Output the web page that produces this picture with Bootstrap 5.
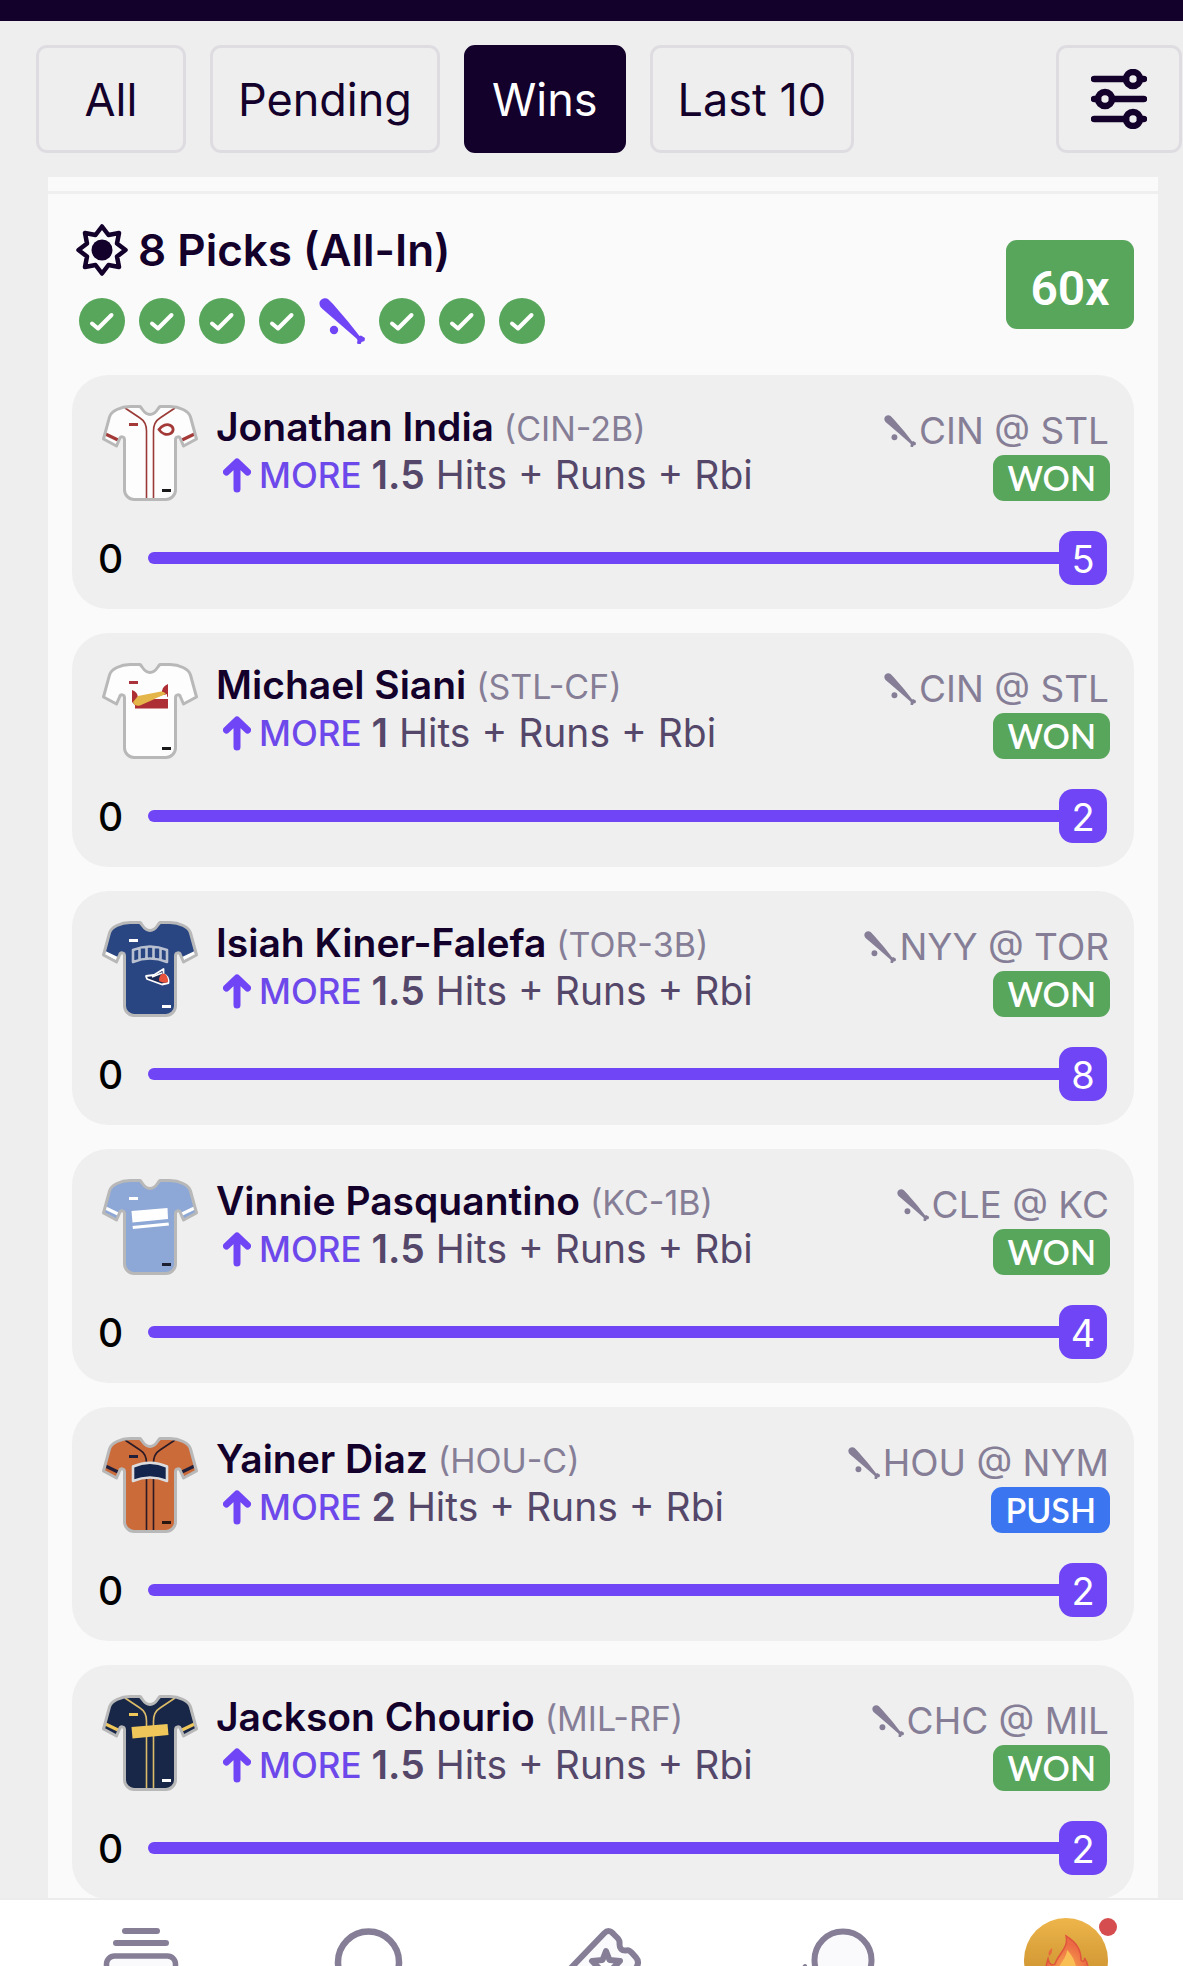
<!DOCTYPE html>
<html lang="en">
<head>
<meta charset="utf-8">
<meta name="viewport" content="width=device-width, initial-scale=1">
<title>My Picks</title>
<link href="https://cdn.jsdelivr.net/npm/bootstrap@5.3.0/dist/css/bootstrap.min.css" rel="stylesheet">
<style>
  :root { --ink: #13002b; --soft: #54476a; --muted: #857e96; --violet: #7045f5; --win: #58a65c; --push: #3b76f0; --line: #dedce1; }
  body { font-family: Inter, "Liberation Sans", sans-serif; color: var(--ink); background: #eee; }
  svg { display: block; flex: none; }
  .top-strip { height: 21px; background: var(--ink); flex: none; }
  .filters { padding: 24px 1px 24px 36px; gap: 24px; }
  .chip { height: 108px; min-width: 150px; padding: 2px 25px 0; border: 3px solid var(--line); border-radius: 11px; font-size: 45px; line-height: 54px; color: var(--ink); white-space: nowrap; }
  .chip.active { background: var(--ink) !important; border-color: var(--ink) !important; color: #fff !important; }
  .chip-icon { min-width: 126px; padding-top: 0; }
  .feed { min-height: 0; }
  .panel { margin: 0 25px 0 48px; background: #fafafa; }
  .panel-top { height: 17px; border-bottom: 3px solid #efefef; }
  .entry { padding: 28px 24px 24px; }
  .entry-title { font-size: 44px; line-height: 56px; font-weight: 600; gap: 9px; padding-left: 3px; }
  .results { gap: 14px; padding-left: 7px; margin-top: 20px; }
  .payout { width: 128px; height: 89px; margin-top: 2px; border-radius: 11px; background: var(--win); font: 600 48px/56px Roboto, sans-serif; padding-top: 10px; }
  .picks { gap: 24px; margin-top: 31px; }
  .pick { background: #efefef; border-radius: 36px; padding: 28px 24px 24px; }
  .jersey { margin: 2px 18px 0 6px; }
  .player { font-size: 39px; line-height: 48px; font-weight: 600; white-space: nowrap; }
  .team { font-size: 34px; font-weight: 400; color: var(--muted); }
  .stat { font-size: 39px; line-height: 44px; color: var(--soft); white-space: nowrap; padding-left: 7px; }
  .dir { font-size: 35px; font-weight: 500; color: #6d48ea; margin: 0 10px 0 8px; }
  .stat-line { font-weight: 600; margin-right: 11px; }
  .matchup { font-size: 37px; line-height: 48px; color: var(--muted); gap: 3px; padding-right: 1px; white-space: nowrap; }
  .outcome { font: 600 34px/46px Lato, sans-serif; border-radius: 11px; padding: 0 14px; color: #fff; background: var(--win); }
  .outcome-push { background: var(--push); }
  .meter { margin-top: 30px; padding-right: 3px; }
  .meter-from { width: 52px; padding: 2px 0 0 2px; font-size: 39px; line-height: 52px; font-weight: 500; color: #000; }
  .meter .progress { height: 12px; border-radius: 6px 0 0 6px; }
  .meter .progress-bar { background: var(--violet); }
  .meter-value { width: 48px; height: 54px; padding-top: 2px; border-radius: 14px; background: var(--violet); color: #fff; font-size: 38px; line-height: 52px; }
  .tabbar { height: 68px; border-top: 2px solid #ececec; background: #fff; padding: 0 1px 0 25px; flex: none; }
  .tabbar svg { color: var(--muted); overflow: visible; }
</style>
</head>
<body class="vh-100 d-flex flex-column overflow-hidden">

<svg width="0" height="0" class="position-absolute" aria-hidden="true">
  <defs>
    <symbol id="shirt" viewBox="0 0 96 96"><path d="M38 1.500H28C19 1.500 9 6 7.500 12L1.500 34L14.500 41L17.500 34C18.500 31 22.500 31 22.500 35V85C22.500 90 27 94.500 32 94.500H64C69 94.500 73.500 90 73.500 85V35C73.500 31 77.500 31 78.500 34L81.500 41L94.500 34L88.500 12C87 6 77 1.500 68 1.500H58C55 4 54 9.500 48 9.500S41 4 38 1.500Z"/></symbol>
    <symbol id="trim" viewBox="0 0 96 96"><path fill="none" stroke="#b8b8b9" stroke-width="3" stroke-linejoin="round" d="M38 1.500H28C19 1.500 9 6 7.500 12L1.500 34L14.500 41L17.500 34C18.500 31 22.500 31 22.500 35V85C22.500 90 27 94.500 32 94.500H64C69 94.500 73.500 90 73.500 85V35C73.500 31 77.500 31 78.500 34L81.500 41L94.500 34L88.500 12C87 6 77 1.500 68 1.500H58C55 4 54 9.500 48 9.500S41 4 38 1.500Z"/></symbol>
    <symbol id="piping" viewBox="0 0 96 96"><path fill="none" stroke="currentColor" stroke-width="1.600" d="M23 3L38 13Q44.500 17 44.500 26V93M73 3L58 13Q51.500 17 51.500 26V93"/></symbol>
    <symbol id="cuffs" viewBox="0 0 96 96"><path fill="none" stroke="currentColor" stroke-width="3.200" d="M3.500 29L16 35M92.500 29L80 35"/></symbol>
    <symbol id="bat" viewBox="0 0 46 46"><path fill="currentColor" d="M.5 6C0 1.500 6-1.500 9.500 1.500L14 6L29 23.500L40.500 38L42 37.500L46 40L45.500 43L42.500 44L41.500 46.500L38 45.500L38.500 42L37.500 40.500L22 27L3.500 11C1.500 9.500.8 8 .5 6Z"/><circle cx="15" cy="32" r="4.200" fill="currentColor"/></symbol>
    <symbol id="up" viewBox="0 0 28 35"><path fill="none" stroke="#7045f5" stroke-width="7" stroke-linecap="round" stroke-linejoin="round" d="M14 31V5M3.500 14L14 4L24.500 14"/></symbol>
    <symbol id="won" viewBox="0 0 46 46"><circle cx="23" cy="23" r="23" fill="#58a65c"/><path fill="none" stroke="#fff" stroke-width="4" stroke-linecap="round" stroke-linejoin="round" d="M13 25.500L19 30.500L32.500 17"/></symbol>
    <linearGradient id="gold" x1="0" y1="0" x2="0" y2="1"><stop offset="0" stop-color="#edb54a"/><stop offset="1" stop-color="#bf8527"/></linearGradient>
    <radialGradient id="fire" cx=".5" cy=".65" r=".5"><stop offset="0" stop-color="#f8b04f"/><stop offset="1" stop-color="#ec6a44"/></radialGradient>
  </defs>
</svg>

<div class="top-strip"></div>

<nav class="filters d-flex flex-shrink-0" aria-label="Filter entries">
  <button type="button" class="btn chip">All</button>
  <button type="button" class="btn chip">Pending</button>
  <button type="button" class="btn chip active" aria-pressed="true">Wins</button>
  <button type="button" class="btn chip">Last 10</button>
  <button type="button" class="btn chip chip-icon ms-auto d-flex align-items-center justify-content-center" aria-label="More filters">
    <svg width="56" height="60" viewBox="0 0 56 60" fill="none" stroke="#13002b" stroke-width="6.500" stroke-linecap="round"><path d="M3 10H35M49 10H53M3 30H7M21 30H53M3 50H35M49 50H53"/><circle cx="42" cy="10" r="7"/><circle cx="14" cy="30" r="7"/><circle cx="42" cy="50" r="7"/></svg>
  </button>
</nav>

<main class="feed flex-fill overflow-hidden">
  <div class="panel">
    <div class="panel-top"></div>
    <section class="entry">
      <header class="d-flex align-items-center justify-content-between">
        <div>
          <h1 class="entry-title d-flex align-items-center mb-0">
            <svg width="54" height="54" viewBox="0 0 54 54"><path fill="none" stroke="#13002b" stroke-width="4.500" stroke-linejoin="round" d="M27 3.500L33.500 12L44 10L42 20.500L50.500 27L42 33.500L44 44L33.500 42L27 50.500L20.500 42L10 44L12 33.500L3.500 27L12 20.500L10 10L20.500 12Z"/><circle cx="27" cy="27" r="10.500" fill="#13002b"/></svg>
            8 Picks (All-In)
          </h1>
          <div class="results d-flex">
            <svg width="46" height="46"><use href="#won"/></svg>
            <svg width="46" height="46"><use href="#won"/></svg>
            <svg width="46" height="46"><use href="#won"/></svg>
            <svg width="46" height="46"><use href="#won"/></svg>
            <svg width="46" height="46" color="#7045f5"><use href="#bat"/></svg>
            <svg width="46" height="46"><use href="#won"/></svg>
            <svg width="46" height="46"><use href="#won"/></svg>
            <svg width="46" height="46"><use href="#won"/></svg>
          </div>
        </div>
        <div class="payout text-white d-flex align-items-center justify-content-center">60x</div>
      </header>

      <div class="picks d-flex flex-column">

        <article class="pick">
          <div class="d-flex">
            <svg class="jersey" width="96" height="96" viewBox="0 0 96 96">
              <use href="#shirt" fill="#fdfdfd"/><use href="#piping" color="#9a3a37"/><use href="#cuffs" color="#a43a38"/>
              <path fill="#a43a38" d="M27 18h9v3h-9z"/><path fill="none" stroke="#a43a38" stroke-width="2.800" d="M57 24.500C60 20 65 18.500 68.500 20.500C72 22.500 72 26.500 68.500 28.500C64.500 30.500 60 29 57 24.500Z"/>
              <path fill="#1a1a1c" d="M60 84h9v3h-9z"/><use href="#trim"/>
            </svg>
            <div>
              <div class="player">Jonathan India <span class="team">(CIN-2B)</span></div>
              <div class="stat d-flex align-items-center"><svg width="28" height="35"><use href="#up"/></svg><span class="dir">MORE</span><span class="stat-line">1.5</span><span>Hits + Runs + Rbi</span></div>
            </div>
            <div class="ms-auto pt-1 d-flex flex-column align-items-end">
              <div class="matchup d-flex align-items-center"><svg width="32" height="32"><use href="#bat"/></svg><span>CIN @ STL</span></div>
              <div class="outcome">WON</div>
            </div>
          </div>
          <div class="meter d-flex align-items-center">
            <span class="meter-from">0</span>
            <div class="progress flex-fill" role="progressbar" aria-label="Jonathan India total" aria-valuenow="100" aria-valuemin="0" aria-valuemax="100"><div class="progress-bar" style="width:100%"></div></div>
            <span class="meter-value text-center">5</span>
          </div>
        </article>

        <article class="pick">
          <div class="d-flex">
            <svg class="jersey" width="96" height="96" viewBox="0 0 96 96">
              <use href="#shirt" fill="#fdfdfd"/>
              <path fill="#a9343b" d="M27 18h9v3h-9z"/>
              <path fill="#ad2f35" d="M30 27Q36 29 36 35L33 42L30 39ZM66 21V34L60 31Q59 24 66 21ZM33 40Q36 36 45 36H66V45.500H33Z"/>
              <path fill="#e4b549" d="M31 39L36 33L59 28.500Q62 28 64 31L38 42.500Q33 44 31 39Z"/><path fill="#fdfdfd" d="M52 36L65 31V35Z"/>
              <path fill="#1a1a1c" d="M60 84h9v3h-9z"/><use href="#trim"/>
            </svg>
            <div>
              <div class="player">Michael Siani <span class="team">(STL-CF)</span></div>
              <div class="stat d-flex align-items-center"><svg width="28" height="35"><use href="#up"/></svg><span class="dir">MORE</span><span class="stat-line">1</span><span>Hits + Runs + Rbi</span></div>
            </div>
            <div class="ms-auto pt-1 d-flex flex-column align-items-end">
              <div class="matchup d-flex align-items-center"><svg width="32" height="32"><use href="#bat"/></svg><span>CIN @ STL</span></div>
              <div class="outcome">WON</div>
            </div>
          </div>
          <div class="meter d-flex align-items-center">
            <span class="meter-from">0</span>
            <div class="progress flex-fill" role="progressbar" aria-label="Michael Siani total" aria-valuenow="100" aria-valuemin="0" aria-valuemax="100"><div class="progress-bar" style="width:100%"></div></div>
            <span class="meter-value text-center">2</span>
          </div>
        </article>

        <article class="pick">
          <div class="d-flex">
            <svg class="jersey" width="96" height="96" viewBox="0 0 96 96">
              <use href="#shirt" fill="#2a4682"/>
              <path fill="none" stroke="#fff" stroke-width="4" d="M3 32L15.500 38M93 32L80.500 38"/>
              <path fill="#fff" d="M27 18h9v3h-9zM60 84h9v3h-9z"/>
              <path fill="#2a4682" stroke="#b9c1d1" stroke-width="2.600" stroke-linejoin="round" d="M31 29Q48 22 65 29V41Q48 34 31 41ZM37.500 27V38M44.500 25.500V37M51.500 25.500V37M58.500 27V38"/>
              <path fill="#1c2a55" stroke="#fff" stroke-width="1.800" stroke-linejoin="round" d="M44 55L52 54L61.500 48V53Q67 55 66.500 62L60 63.500L45 58Z"/>
              <path fill="#e8533c" d="M57 60Q57 52.500 62 52.500Q66 54 66 61Q62 63 57 60Z"/><path fill="none" stroke="#fff" stroke-width="1.500" d="M50 56L60 52"/>
              <use href="#trim"/>
            </svg>
            <div>
              <div class="player">Isiah Kiner-Falefa <span class="team">(TOR-3B)</span></div>
              <div class="stat d-flex align-items-center"><svg width="28" height="35"><use href="#up"/></svg><span class="dir">MORE</span><span class="stat-line">1.5</span><span>Hits + Runs + Rbi</span></div>
            </div>
            <div class="ms-auto pt-1 d-flex flex-column align-items-end">
              <div class="matchup d-flex align-items-center"><svg width="32" height="32"><use href="#bat"/></svg><span>NYY @ TOR</span></div>
              <div class="outcome">WON</div>
            </div>
          </div>
          <div class="meter d-flex align-items-center">
            <span class="meter-from">0</span>
            <div class="progress flex-fill" role="progressbar" aria-label="Isiah Kiner-Falefa total" aria-valuenow="100" aria-valuemin="0" aria-valuemax="100"><div class="progress-bar" style="width:100%"></div></div>
            <span class="meter-value text-center">8</span>
          </div>
        </article>

        <article class="pick">
          <div class="d-flex">
            <svg class="jersey" width="96" height="96" viewBox="0 0 96 96">
              <use href="#shirt" fill="#8da8d6"/><use href="#cuffs" color="#fff"/>
              <path fill="#fff" d="M27 18h9v3h-9zM29.500 32L65.500 29L66 40L30.500 43.500ZM30.500 47L66.500 43.500L67 46.500L31 50Z"/>
              <path fill="#1c2030" d="M60 84h9v3h-9z"/><use href="#trim"/>
            </svg>
            <div>
              <div class="player">Vinnie Pasquantino <span class="team">(KC-1B)</span></div>
              <div class="stat d-flex align-items-center"><svg width="28" height="35"><use href="#up"/></svg><span class="dir">MORE</span><span class="stat-line">1.5</span><span>Hits + Runs + Rbi</span></div>
            </div>
            <div class="ms-auto pt-1 d-flex flex-column align-items-end">
              <div class="matchup d-flex align-items-center"><svg width="32" height="32"><use href="#bat"/></svg><span>CLE @ KC</span></div>
              <div class="outcome">WON</div>
            </div>
          </div>
          <div class="meter d-flex align-items-center">
            <span class="meter-from">0</span>
            <div class="progress flex-fill" role="progressbar" aria-label="Vinnie Pasquantino total" aria-valuenow="100" aria-valuemin="0" aria-valuemax="100"><div class="progress-bar" style="width:100%"></div></div>
            <span class="meter-value text-center">4</span>
          </div>
        </article>

        <article class="pick">
          <div class="d-flex">
            <svg class="jersey" width="96" height="96" viewBox="0 0 96 96">
              <use href="#shirt" fill="#cb6b3a"/><use href="#piping" color="#2b1a26"/><use href="#cuffs" color="#221f3a"/>
              <path fill="#221f3a" d="M27 18h9v3h-9z"/><path fill="#13244d" stroke="#dcdcdf" stroke-width="2.600" stroke-linejoin="round" d="M31 29.500Q48 22 65 29.500V44Q48 37 31 44Z"/>
              <path fill="#2b1712" d="M60 84h9v3h-9z"/><use href="#trim"/>
            </svg>
            <div>
              <div class="player">Yainer Diaz <span class="team">(HOU-C)</span></div>
              <div class="stat d-flex align-items-center"><svg width="28" height="35"><use href="#up"/></svg><span class="dir">MORE</span><span class="stat-line">2</span><span>Hits + Runs + Rbi</span></div>
            </div>
            <div class="ms-auto pt-1 d-flex flex-column align-items-end">
              <div class="matchup d-flex align-items-center"><svg width="32" height="32"><use href="#bat"/></svg><span>HOU @ NYM</span></div>
              <div class="outcome outcome-push">PUSH</div>
            </div>
          </div>
          <div class="meter d-flex align-items-center">
            <span class="meter-from">0</span>
            <div class="progress flex-fill" role="progressbar" aria-label="Yainer Diaz total" aria-valuenow="100" aria-valuemin="0" aria-valuemax="100"><div class="progress-bar" style="width:100%"></div></div>
            <span class="meter-value text-center">2</span>
          </div>
        </article>

        <article class="pick">
          <div class="d-flex">
            <svg class="jersey" width="96" height="96" viewBox="0 0 96 96">
              <use href="#shirt" fill="#182747"/><use href="#piping" color="#dcbb68"/><use href="#cuffs" color="#eec65a"/>
              <path fill="#eec65a" d="M27 18h9v3h-9zM29.500 32L65.500 29L66.500 40L30.500 43.500Z"/>
              <path fill="#fff" d="M60 84h9v3h-9z"/><use href="#trim"/>
            </svg>
            <div>
              <div class="player">Jackson Chourio <span class="team">(MIL-RF)</span></div>
              <div class="stat d-flex align-items-center"><svg width="28" height="35"><use href="#up"/></svg><span class="dir">MORE</span><span class="stat-line">1.5</span><span>Hits + Runs + Rbi</span></div>
            </div>
            <div class="ms-auto pt-1 d-flex flex-column align-items-end">
              <div class="matchup d-flex align-items-center"><svg width="32" height="32"><use href="#bat"/></svg><span>CHC @ MIL</span></div>
              <div class="outcome">WON</div>
            </div>
          </div>
          <div class="meter d-flex align-items-center">
            <span class="meter-from">0</span>
            <div class="progress flex-fill" role="progressbar" aria-label="Jackson Chourio total" aria-valuenow="100" aria-valuemin="0" aria-valuemax="100"><div class="progress-bar" style="width:100%"></div></div>
            <span class="meter-value text-center">2</span>
          </div>
        </article>

      </div>
    </section>
  </div>
</main>

<nav class="tabbar d-flex overflow-hidden" aria-label="Main">
  <a href="#board" class="flex-fill d-flex justify-content-center" aria-label="Board">
    <svg width="90" height="66" viewBox="0 0 90 66" stroke="currentColor" stroke-width="6" stroke-linecap="round"><path d="M29 31H61M20 43H70"/><rect x="10.500" y="56" width="69" height="50" rx="8" fill="#fafafd" stroke-width="5.500"/></svg>
  </a>
  <a href="#search" class="flex-fill d-flex justify-content-center" aria-label="Search">
    <svg width="90" height="66" viewBox="0 0 90 66"><circle cx="41.500" cy="62" r="30.500" fill="#fff" stroke="currentColor" stroke-width="6.500"/></svg>
  </a>
  <a href="#entries" class="flex-fill d-flex justify-content-center" aria-label="Entries">
    <svg width="90" height="66" viewBox="0 0 90 66" fill="#fafafd" stroke="currentColor" stroke-width="6" stroke-linejoin="round"><path d="M10 70L45 33.500Q50 28.500 54.500 34L59 38.500Q61 41 60.500 44Q60.500 51 67 50.500Q70 49.500 73 53L77 57.500Q81 62 77 68L60 90H20Z"/><path fill="#fff" d="M47 51L50.500 60L61 61L54 68L56 78L47 74L38 78L40 68L33 61L43.500 60Z"/></svg>
  </a>
  <a href="#chat" class="flex-fill d-flex justify-content-center" aria-label="Chat">
    <svg width="90" height="66" viewBox="0 0 90 66" stroke="currentColor" stroke-width="6"><circle cx="53" cy="60" r="28.500" fill="#fafafd"/><path d="M10 73L15 66" stroke-linecap="round" stroke-width="4"/></svg>
  </a>
  <a href="#profile" class="flex-fill d-flex justify-content-center" aria-label="Profile, new activity">
    <svg width="90" height="66" viewBox="0 0 90 66"><circle cx="45" cy="60" r="42" fill="url(#gold)"/><path fill="url(#fire)" stroke="#e0553d" stroke-width="1.500" d="M45 36C58 44 60 52 60 60C61 62 64 62 63.500 58C70 68 69 84 45 90C24 86 22 74 27 59C28 64 31 66 34 64C37 54 48 48 45 36Z"/><path fill="#f9bf55" d="M46 50C53 57 55 64 56 74H36C37 64 45 60 46 50Z"/><path fill="#e8683f" d="M31 48Q26 52 28 56Q32 53 31 48Z"/><circle cx="87" cy="27" r="9" fill="#d54d4f"/></svg>
  </a>
</nav>

<script src="https://cdn.jsdelivr.net/npm/bootstrap@5.3.0/dist/js/bootstrap.bundle.min.js"></script>
</body>
</html>
